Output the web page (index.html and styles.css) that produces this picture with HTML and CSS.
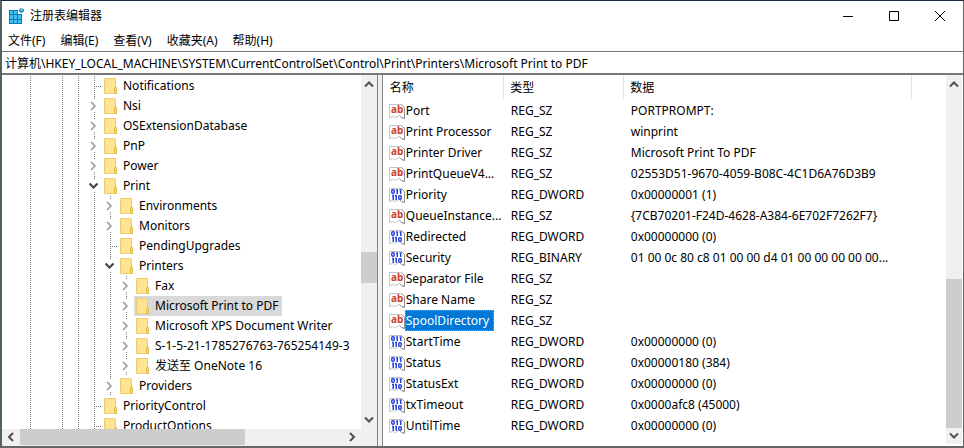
FILE: index.html
```html
<!DOCTYPE html>
<html lang="zh-CN">
<head>
<meta charset="utf-8">
<title>注册表编辑器</title>
<link rel="stylesheet" href="styles.css">
</head>
<body>
<svg class="defs" aria-hidden="true">
  <symbol id="folder" viewBox="0 0 14 16">
    <path d="M.5.5h11v9h1v6H.5z" fill="#ffe593" stroke="#efcd6c"/>
    <path d="M10.500 14.500v-4l1-2 1 2v5h-2z" fill="#f8d877" stroke="#e3bc50"/>
    <path d="M1.500 1v14" stroke="#ffdc74"/>
  </symbol>
  <symbol id="right" viewBox="0 0 16 20"><path d="M5 6l4 4-4 4" fill="none" stroke="#969696" stroke-width="1.500"/></symbol>
  <symbol id="down" viewBox="0 0 16 20"><path d="M3.500 7.500l4 4 4-4" fill="none" stroke="#404040" stroke-width="2"/></symbol>
  <symbol id="page" viewBox="0 0 16 16">
    <path d="M.5 1.500h12l3 3v11l-3-1-2-2-2 1-2 1-3-1-3 1z" fill="#fff" stroke="#c4c4c4"/>
    <path d="M12.500 1.500l3 3v11l-3-1-2-2" fill="none" stroke="#8e8e8e"/>
  </symbol>
  <symbol id="bits" viewBox="0 0 16 16">
    <use href="#page"/>
    <g fill="none" stroke="#2a45dc" stroke-width="1.500">
      <rect x="2.750" y="2.750" width="2.500" height="3.500" rx="1"/><path d="M7 3h1.250v4M10.500 3h1.250v4M3 8.500h1.250v4.500M6 8.500h1.250v4.500"/>
      <rect x="9.750" y="8.750" width="2.500" height="3.500" rx="1"/>
    </g>
  </symbol>
</svg>
<main class="window">
  <header class="title">
    <svg class="logo" viewBox="0 0 16 16" aria-hidden="true">
      <path d="M1 2h9v4h4v10H1z" fill="#087bb8"/>
      <g fill="#45c0ee"><path d="M2 3h3v3H2zM6 3h3v3H6zM2 7h3v4H2zM6 7h3v4H6zM10 7h3v4h-3zM2 12h3v3H2zM6 12h3v3H6zM10 12h3v3h-3z"/></g>
      <path d="M13 0l3 1.500v2L13 5l-2-1.500v-2z" fill="#168ac4"/><path d="M12 2l1.500-1L15 2l-1.500 1z" fill="#9be2fa"/>
    </svg>
    <h1>注册表编辑器</h1>
    <div class="controls">
      <button aria-label="最小化"><svg viewBox="0 0 12 12"><path d="M1 6.500h10"/></svg></button>
      <button aria-label="最大化"><svg viewBox="0 0 12 12"><path d="M1.500 1.500h9v9h-9z"/></svg></button>
      <button aria-label="关闭"><svg viewBox="0 0 12 12"><path d="M1 1l10 10M11 1L1 11"/></svg></button>
    </div>
  </header>
  <nav class="menu">
    <button>文件(F)</button><button>编辑(E)</button><button>查看(V)</button><button>收藏夹(A)</button><button>帮助(H)</button>
  </nav>
  <input class="address" aria-label="地址" value="计算机\HKEY_LOCAL_MACHINE\SYSTEM\CurrentControlSet\Control\Print\Printers\Microsoft Print to PDF">
  <div class="panes">
    <section class="left">
      <ul class="tree" id="tree"></ul>
      <div class="vbar">
        <button aria-label="向上滚动"><svg viewBox="0 0 16 16"><path d="M4 11.500l4-4 4 4"/></svg></button>
        <div class="track"><div class="gap-tree"></div><div class="thumb thumb-tree"></div><div class="rest-tree"></div></div>
        <button aria-label="向下滚动"><svg viewBox="0 0 16 16"><path d="M4 4.500l4 4 4-4"/></svg></button>
      </div>
      <div class="hbar">
        <button aria-label="向左滚动"><svg viewBox="0 0 16 16"><path d="M11 4l-4 4 4 4"/></svg></button>
        <div class="track"><div class="thumb thumb-side"></div></div>
        <button aria-label="向右滚动"><svg viewBox="0 0 16 16"><path d="M5 4l4 4-4 4"/></svg></button>
      </div>
    </section>
    <div class="splitter"></div>
    <section class="right">
      <div class="list">
        <table>
          <colgroup><col class="c-name"><col class="c-type"><col class="c-data"><col></colgroup>
          <thead><tr><th>名称</th><th>类型</th><th>数据</th><th></th></tr></thead>
          <tbody id="values"></tbody>
        </table>
      </div>
      <div class="vbar">
        <button aria-label="向上滚动"><svg viewBox="0 0 16 16"><path d="M4 11.500l4-4 4 4"/></svg></button>
        <div class="track"><div class="gap-list"></div><div class="thumb thumb-list"></div></div>
        <button aria-label="向下滚动"><svg viewBox="0 0 16 16"><path d="M4 5.500l4 4 4-4"/></svg></button>
      </div>
    </section>
  </div>
</main>
<script src="app.js"></script>
</body>
</html>
```
FILE: styles.css
```css
* { box-sizing: border-box; }
body {
  margin: 0;
  font: 12px/20px "Noto Sans", "Noto Sans CJK SC", sans-serif;
  color: #000;
  background: #fff;
}
button { font: inherit; color: inherit; background: none; border: 0; padding: 0; }
svg { display: block; flex: none; }
.defs { position: absolute; width: 0; height: 0; }
.window {
  display: flex;
  flex-direction: column;
  height: 100vh;
  border: 2px solid #666;
  border-top: 1px solid #1c2c42;
  border-left-color: #52606a;
  border-right-width: 1px;
}
.title { display: flex; align-items: center; height: 29px; padding-left: 6px; }
.logo { width: 16px; height: 16px; }
h1 { margin: 0 0 0 6px; font-size: 12px; font-weight: 400; }
.controls { display: flex; margin-left: auto; }
.controls button { display: grid; place-items: center; width: 46px; height: 29px; }
.controls svg { width: 12px; height: 12px; fill: none; stroke: #000; }
.menu { display: flex; gap: 15px; height: 21px; padding-left: 6px; }
.address {
  width: 100%;
  height: 24px;
  padding: 0 3px;
  border: solid #777;
  border-width: 1px 0 2px;
  font: inherit;
  color: inherit;
  outline: 0;
}
.panes { display: flex; flex: 1; min-height: 0; }
.left {
  display: grid;
  grid-template: minmax(0, 1fr) 16px / minmax(0, 1fr) 16px;
  width: 39%;
  padding-bottom: 1px;
  background: #f0f0f0;
}
.splitter { width: 6px; border: solid #828282; border-width: 0 1px 0 1px; background: #f0f0f0; }
.tree { margin: 0; padding: 1px 0 0 20px; list-style: none; overflow: hidden; background: #fff; }
.tree li { display: flex; height: 20px; white-space: nowrap; }
.cell { flex: none; width: 16px; height: 20px; }
.line {
  background: repeating-linear-gradient(#777 0 1px, #fff 1px 2px) 8px 0 / 1px 20px no-repeat;
}
.leaf {
  background:
    repeating-linear-gradient(#777 0 1px, #fff 1px 2px) 8px 0 / 1px 20px no-repeat,
    repeating-linear-gradient(90deg, #777 0 1px, #fff 1px 2px) 8px 10px / 8px 1px no-repeat;
}
.twist {
  background:
    repeating-linear-gradient(#777 0 1px, #fff 1px 2px) 8px 0 / 1px 4px no-repeat,
    repeating-linear-gradient(#777 0 1px, #fff 1px 2px) 8px 16px / 1px 4px no-repeat;
}
.item { display: flex; align-items: center; padding: 0 4px 0 2px; }
.item svg { width: 14px; height: 16px; margin-right: 5px; }
.item.selected { background: #d9d9d9; }
.vbar { display: flex; flex-direction: column; width: 16px; background: #f0f0f0; }
.vbar button, .hbar button { width: 16px; height: 16px; }
.vbar button svg, .hbar button svg { width: 16px; height: 16px; fill: none; stroke: #505050; stroke-width: 2; }
.track { display: flex; flex: 1; }
.vbar .track { flex-direction: column; }
.hbar { display: flex; }
.thumb { background: #cdcdcd; }
.gap-tree { flex: 161; }
.thumb-tree { flex: 31; }
.rest-tree { flex: 130; }
.thumb-side { width: 69%; margin-left: 2px; }
.gap-list { flex: 188; }
.thumb-list { flex: 149; }
.right { display: flex; flex: 1; min-width: 0; padding: 0 1px 2px 1px; }
.list { flex: 1; min-width: 0; overflow: hidden; }
table { width: 100%; table-layout: fixed; border-collapse: collapse; }
.c-name { width: 120px; }
.c-type { width: 120px; }
.c-data { width: 288px; }
th { height: 25px; padding: 0 6px; font-weight: 400; text-align: left; border-right: 1px solid #e5e5e5; }
th:last-child { border: 0; }
td { height: 21px; padding: 0 7px; white-space: nowrap; overflow: hidden; }
td:first-child { padding: 0 0 0 5px; }
.value { display: flex; align-items: center; height: 21px; }
.value svg { width: 16px; height: 16px; }
.value text { font: bold 10px "Noto Sans", sans-serif; fill: #d0401f; }
.value span { padding: 0 4px 0 1px; border: 1px solid transparent; border-left: 0; line-height: 19px; }
.value .selected { color: #fff; background: #0078d7; border: 1px dotted #e68a3c; padding-left: 0; }
```
FILE: app.js
```js
// Each entry: guide cells, label, selected. l = line, b = blank, e = leaf, r = collapsed, d = expanded.
const keys = [
  ["lblle", "Notifications"], ["lbllr", "Nsi"], ["lbllr", "OSExtensionDatabase"],
  ["lbllr", "PnP"], ["lbllr", "Power"], ["lblld", "Print"],
  ["lblllr", "Environments"], ["lblllr", "Monitors"], ["lbllle", "PendingUpgrades"],
  ["lbllld", "Printers"], ["lbllllr", "Fax"], ["lbllllr", "Microsoft Print to PDF", true],
  ["lbllllr", "Microsoft XPS Document Writer"],
  ["lbllllr", "S-1-5-21-1785276763-765254149-3"], ["lbllllr", "发送至 OneNote 16"],
  ["lblllr", "Providers"], ["lblle", "PriorityControl"], ["lblle", "ProductOptions"]
];
const cells = {
  l: '<span class="cell line"></span>',
  b: '<span class="cell"></span>',
  e: '<span class="cell leaf"></span>',
  r: '<svg class="cell twist"><use href="#right"/></svg>',
  d: '<svg class="cell twist"><use href="#down"/></svg>'
};
document.getElementById("tree").innerHTML = keys.map(([guides, name, selected]) =>
  `<li>${[...guides].map(g => cells[g]).join("")}<span class="item${selected ? " selected" : ""}"><svg><use href="#folder"/></svg>${name}</span></li>`
).join("");

const values = [
  ["Port", "SZ", "PORTPROMPT:"], ["Print Processor", "SZ", "winprint"],
  ["Printer Driver", "SZ", "Microsoft Print To PDF"],
  ["PrintQueueV4...", "SZ", "02553D51-9670-4059-B08C-4C1D6A76D3B9"],
  ["Priority", "DWORD", "0x00000001 (1)"],
  ["QueueInstance...", "SZ", "{7CB70201-F24D-4628-A384-6E702F7262F7}"],
  ["Redirected", "DWORD", "0x00000000 (0)"],
  ["Security", "BINARY", "01 00 0c 80 c8 01 00 00 d4 01 00 00 00 00 00..."],
  ["Separator File", "SZ", ""], ["Share Name", "SZ", ""], ["SpoolDirectory", "SZ", "", true],
  ["StartTime", "DWORD", "0x00000000 (0)"], ["Status", "DWORD", "0x00000180 (384)"],
  ["StatusExt", "DWORD", "0x00000000 (0)"], ["txTimeout", "DWORD", "0x0000afc8 (45000)"],
  ["UntilTime", "DWORD", "0x00000000 (0)"]
];
const textIcon = '<svg viewBox="0 0 16 16"><use href="#page"/><text x="2" y="10">ab</text></svg>';
const bitsIcon = '<svg><use href="#bits"/></svg>';
document.getElementById("values").innerHTML = values.map(([name, type, data, selected]) =>
  `<tr><td><div class="value">${type === "SZ" ? textIcon : bitsIcon}<span${selected ? ' class="selected"' : ""}>${name}</span></div></td><td>REG_${type}</td><td>${data}</td><td></td></tr>`
).join("");
```
